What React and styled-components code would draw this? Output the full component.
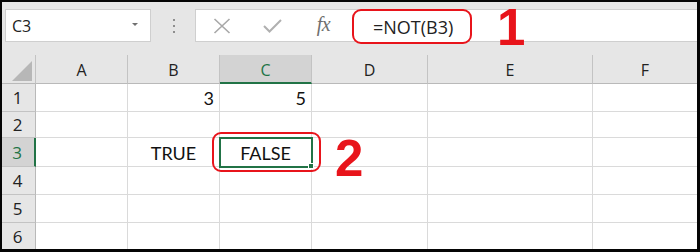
import React from "react";
import styled, { createGlobalStyle, css } from "styled-components";

const Global = createGlobalStyle`
  html, body { margin: 0; padding: 0; background: #000; }
  body { width: 700px; height: 252px; overflow: hidden; }
  * { box-sizing: border-box; }
`;

const GREEN = "#217346";
const RED = "#e8141b";
const GRID = "#dadada";
const HEADER_LINE = "#c3c3c3";

const Frame = styled.div`
  width: 700px;
  height: 252px;
  border-style: solid;
  border-color: #050505;
  border-width: 2px 3px 3px 2px;
  background: #e6e6e6;
  display: flex;
  flex-direction: column;
  font-family: "Open Sans", "Noto Sans", sans-serif;
`;

const Toolbar = styled.div`
  height: 53px;
  display: flex;
  align-items: flex-start;
  padding: 7px 0 0 3px;
  background: #e6e6e6;
`;

const NameBox = styled.div`
  width: 146px;
  height: 33px;
  background: #fff;
  border: 1px solid #cfcfcf;
  display: flex;
  align-items: center;
  justify-content: space-between;
  padding: 0 12px 0 6px;
  font-size: 16px;
  color: #222;
`;

const Caret = styled.span`
  width: 0;
  height: 0;
  border-left: 3px solid transparent;
  border-right: 3px solid transparent;
  border-top: 3px solid #707070;
  margin-top: -2px;
`;

const Grip = styled.div`
  width: 44px;
  height: 33px;
  display: flex;
  flex-direction: column;
  align-items: center;
  justify-content: center;
  gap: 4px;
  padding-left: 1px;
`;

const Dot = styled.span`
  width: 2px;
  height: 2px;
  background: #8e8e8e;
`;

const FormulaBox = styled.div`
  flex: 1;
  height: 33px;
  background: #fff;
  border: 1px solid #cfcfcf;
  border-right: none;
  display: flex;
  align-items: center;
`;

const IconSlot = styled.div`
  width: 51px;
  height: 31px;
  display: flex;
  align-items: center;
  justify-content: center;
  color: ${(p) => p.$color || "#a8a8a8"};
`;

const Fx = styled.span`
  font-family: "Liberation Serif", "DejaVu Serif", serif;
  font-style: italic;
  font-size: 20px;
  color: #6f6f6f;
  letter-spacing: -0.5px;
  margin-top: -2px;
`;

const FormulaHighlight = styled.div`
  margin-left: 3px;
  align-self: flex-start;
  margin-top: -1px;
  width: 120px;
  height: 35px;
  border: 2px solid ${RED};
  border-radius: 9px;
  display: flex;
  align-items: center;
  padding-left: 19px;
  font-size: 18px;
  color: #222;
  background: #fff;
`;

const BigNumber = styled.span`
  display: inline-block;
  font-family: "Liberation Sans", Arial, sans-serif;
  font-weight: 700;
  font-size: 51px;
  line-height: 1;
  color: ${RED};
  ${(p) =>
    p.$inline &&
    css`
      align-self: flex-start;
      margin: -8px 0 0 25px;
    `}
`;

const Sheet = styled.div`
  flex: 1;
  display: grid;
  grid-template-columns: 34px 92px 92px 92px 116px 165px 1fr;
  grid-template-rows: 29px 28px 26px 29px 28px 28px 1fr;
  background: #fff;
`;

const ColHead = styled.div`
  background: ${(p) => (p.$active ? "#d3d3d3" : "#e6e6e6")};
  border-right: 1px solid ${HEADER_LINE};
  border-bottom: ${(p) => (p.$active ? `2px solid ${GREEN}` : `1px solid #b9b9b9`)};
  color: ${(p) => (p.$active ? GREEN : "#222")};
  font-size: 16px;
  display: flex;
  align-items: center;
  justify-content: center;
  padding-top: 2px;
  ${(p) =>
    p.$last &&
    css`
      border-right: none;
    `}
`;

const Corner = styled.div`
  background: #e6e6e6;
  border-right: 1px solid ${HEADER_LINE};
  border-bottom: 1px solid #b9b9b9;
  display: flex;
  align-items: flex-end;
  justify-content: flex-end;
  padding: 0 3px 2px 0;
`;

const RowHead = styled.div`
  background: ${(p) => (p.$active ? "#d3d3d3" : "#e6e6e6")};
  border-right: ${(p) => (p.$active ? `2px solid ${GREEN}` : `1px solid #b9b9b9`)};
  border-bottom: 1px solid ${HEADER_LINE};
  color: ${(p) => (p.$active ? GREEN : "#222")};
  font-size: 17px;
  display: flex;
  align-items: center;
  justify-content: center;
  padding-right: 2px;
  ${(p) =>
    p.$last &&
    css`
      border-bottom: none;
    `}
`;

const Cell = styled.div`
  border-right: 1px solid ${GRID};
  border-bottom: 1px solid ${GRID};
  font-family: Lato, "Open Sans", sans-serif;
  font-size: 18px;
  color: #111;
  display: flex;
  align-items: center;
  justify-content: ${(p) =>
    p.$align === "right" ? "flex-end" : p.$align === "center" ? "center" : "flex-start"};
  padding: 1px 5px 0;
  position: relative;
  ${(p) =>
    p.$lastCol &&
    css`
      border-right: none;
    `}
  ${(p) =>
    p.$lastRow &&
    css`
      border-bottom: none;
    `}
  ${(p) =>
    p.$selected &&
    css`
      outline: 2px solid ${GREEN};
      outline-offset: -1px;
      z-index: 2;
    `}
`;

const Handle = styled.span`
  position: absolute;
  right: -3px;
  bottom: -3px;
  width: 6px;
  height: 6px;
  background: ${GREEN};
  border: 1px solid #fff;
`;

const Ring = styled.span`
  position: absolute;
  left: -8px;
  right: -10px;
  top: -6px;
  bottom: -6px;
  border: 2px solid ${RED};
  border-radius: 9px;
  pointer-events: none;
`;

const CellBadge = styled.span`
  position: absolute;
  left: 115px;
  top: -5px;
`;

const cols = ["A", "B", "C", "D", "E", "F"];
const data = {
  1: { B: ["3", "right"], C: ["5", "right"] },
  3: { B: ["TRUE", "center"], C: ["FALSE", "center"] },
};

function XIcon() {
  return (
    <svg width="18" height="16" viewBox="0 0 18 16" fill="none" stroke="currentColor" strokeWidth="1.6">
      <path d="M1.5 1 L16.5 15 M16.5 1 L1.5 15" />
    </svg>
  );
}

function CheckIcon() {
  return (
    <svg width="19" height="14" viewBox="0 0 19 14" fill="none" stroke="currentColor" strokeWidth="2">
      <path d="M1 7 L6.5 12.5 L18 1" />
    </svg>
  );
}

function CornerTriangle() {
  return (
    <svg width="20" height="20" viewBox="0 0 20 20">
      <path d="M20 0 L20 20 L0 20 Z" fill="#b7b7b7" />
    </svg>
  );
}

export default function App() {
  const rows = [1, 2, 3, 4, 5, 6];
  return (
    <>
      <Global />
      <Frame>
        <Toolbar>
          <NameBox>
            <span>C3</span>
            <Caret />
          </NameBox>
          <Grip>
            <Dot />
            <Dot />
            <Dot />
          </Grip>
          <FormulaBox>
            <IconSlot>
              <XIcon />
            </IconSlot>
            <IconSlot $color="#b0b0b0">
              <CheckIcon />
            </IconSlot>
            <IconSlot>
              <Fx>fx</Fx>
            </IconSlot>
            <FormulaHighlight>=NOT(B3)</FormulaHighlight>
            <BigNumber $inline>1</BigNumber>
          </FormulaBox>
        </Toolbar>
        <Sheet>
          <Corner>
            <CornerTriangle />
          </Corner>
          {cols.map((c, i) => (
            <ColHead key={c} $active={c === "C"} $last={i === cols.length - 1}>
              {c}
            </ColHead>
          ))}
          {rows.map((r) => (
            <React.Fragment key={r}>
              <RowHead $active={r === 3} $last={r === 6}>
                {r}
              </RowHead>
              {cols.map((c, i) => {
                const v = data[r] && data[r][c];
                const selected = r === 3 && c === "C";
                return (
                  <Cell
                    key={c}
                    $align={v ? v[1] : "left"}
                    $lastCol={i === cols.length - 1}
                    $lastRow={r === 6}
                    $selected={selected}
                  >
                    {v ? v[0] : null}
                    {selected && (
                      <>
                        <Handle />
                        <Ring />
                        <CellBadge>
                          <BigNumber>2</BigNumber>
                        </CellBadge>
                      </>
                    )}
                  </Cell>
                );
              })}
            </React.Fragment>
          ))}
        </Sheet>
      </Frame>
    </>
  );
}
